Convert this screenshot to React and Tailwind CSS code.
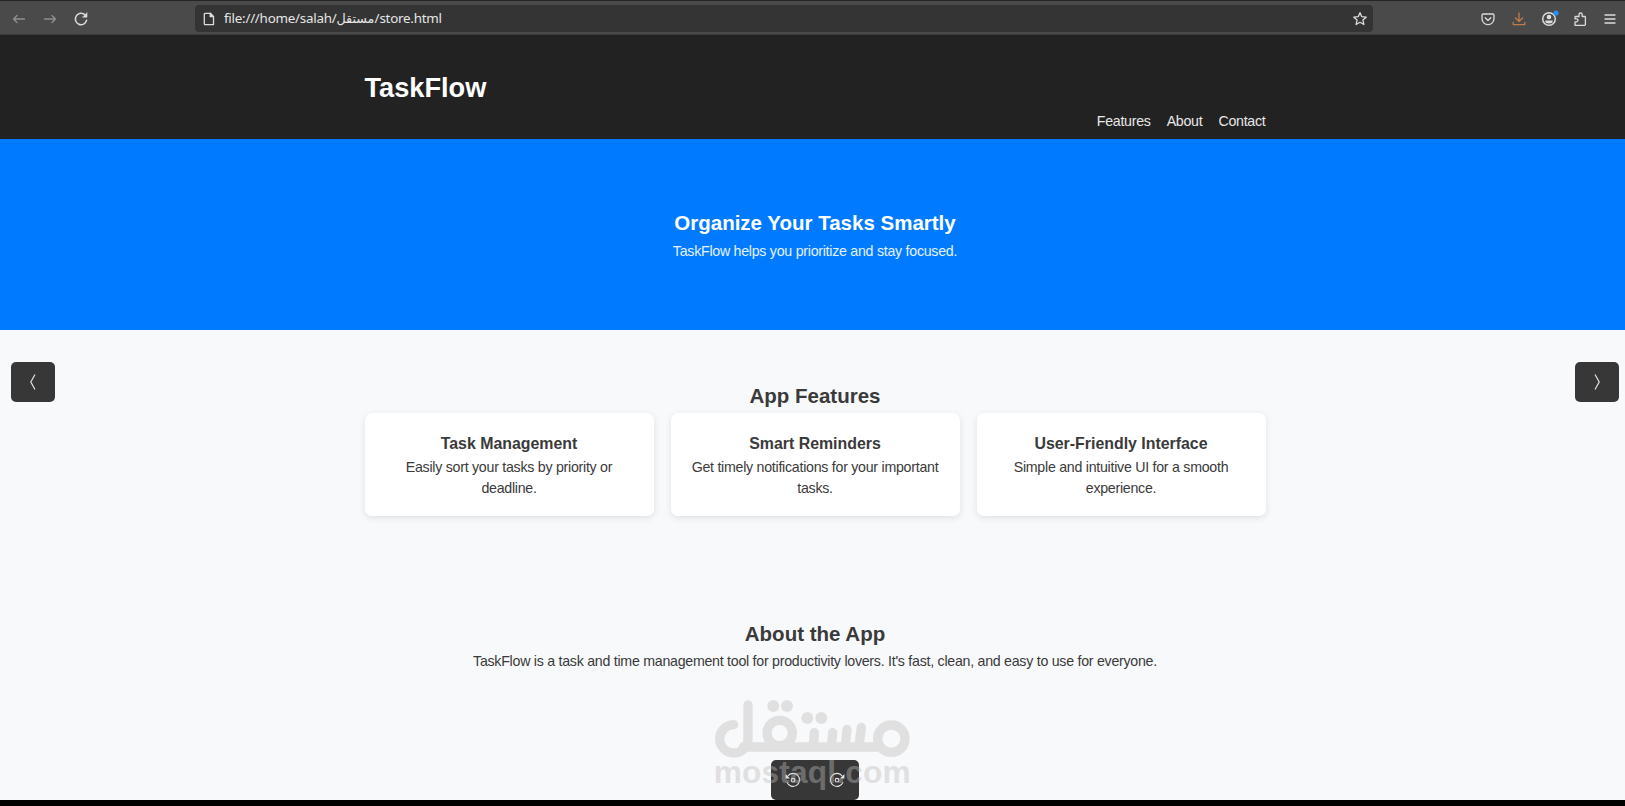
import React from "react";

const features = [
  {
    title: "Task Management",
    text: "Easily sort your tasks by priority or deadline.",
  },
  {
    title: "Smart Reminders",
    text: "Get timely notifications for your important tasks.",
  },
  {
    title: "User-Friendly Interface",
    text: "Simple and intuitive UI for a smooth experience.",
  },
];

const links = ["Features", "About", "Contact"];

const Icon = ({ children, className = "" }) => (
  <svg
    viewBox="0 0 16 16"
    fill="none"
    stroke="currentColor"
    strokeWidth="1.3"
    strokeLinecap="round"
    strokeLinejoin="round"
    className={`size-4 shrink-0 ${className}`}
  >
    {children}
  </svg>
);

const BrowserBar = () => (
  <div className="flex h-[35px] items-center border-t border-b border-t-[#242424] border-b-[#3a3a3a] bg-[#4a4a4a] pt-[2.5px] text-[#dcdcdc]">
    <div className="flex w-[195px] items-center gap-[15px] pl-[11px]">
      <Icon className="text-[#8f8f8f]">
        <path d="M13.5 8h-11M6 4.5 2.5 8 6 11.5" />
      </Icon>
      <Icon className="text-[#8f8f8f]">
        <path d="M2.5 8h11M10 4.5 13.5 8 10 11.5" />
      </Icon>
      <Icon>
        <path d="M13.6 9.2A5.7 5.7 0 1 1 12 3.9" strokeWidth="1.5" />
        <path d="M14 2v4.2H9.8z" fill="currentColor" strokeWidth="0.6" />
      </Icon>
    </div>

    <div className="flex h-[27px] w-[1178px] items-center rounded bg-[#343434] pr-[5px] pl-[6px]">
      <Icon>
        <path d="M4.2 2.3h5l3.3 3.4v8H4.2a.9.9 0 0 1-.9-.9V3.2a.9.9 0 0 1 .9-.9z" />
        <path d="M9.2 2.3v3.4h3.3z" fill="currentColor" />
      </Icon>
      <span
        dir="ltr"
        className="ml-[7px] flex-1 font-['Noto_Sans','DejaVu_Sans',sans-serif] text-[13.4px] leading-none tracking-[-0.25px] whitespace-nowrap text-[#e6e6e6]"
      >
        file:///home/salah/
        <span className="text-[12.7px] tracking-normal">مستقل</span>
        /store.html
      </span>
      <Icon>
        <path d="M8 1.7l1.8 4 4.4.5-3.3 2.9 1 4.4L8 11.3l-3.9 2.2 1-4.4-3.3-2.9 4.4-.5z" />
      </Icon>
    </div>

    <div className="ml-auto flex items-center gap-[14.5px] pr-[7px]">
      <Icon>
        <path d="M3.2 3h9.6c.7 0 1.2.5 1.2 1.2v3.4a6 6 0 0 1-12 0V4.2C2 3.5 2.5 3 3.2 3z" />
        <path d="M5.2 6.8 8 9.4l2.8-2.6" />
      </Icon>
      <Icon className="text-[#c07b4c]">
        <path d="M8 2v8.3M4.4 7 8 10.5 11.6 7M2.2 11.5v2.2h11.6v-2.2" />
      </Icon>
      <Icon className="overflow-visible">
        <circle cx="8" cy="8" r="6.3" strokeWidth="1.5" />
        <circle cx="8" cy="6" r="2.3" fill="currentColor" stroke="none" />
        <path
          d="M4.3 9.6h7.4v.6a3.7 2.2 0 0 1-7.4 0z"
          fill="currentColor"
          stroke="none"
        />
        <circle cx="15" cy="2" r="2.6" fill="#2a8ff0" stroke="none" />
      </Icon>
      <Icon>
        <path d="M3 14.3h9.6a.8.8 0 0 0 .8-.8V6.3a.8.8 0 0 0-.8-.8h-2.4V3.6a1.6 1.6 0 0 0-3.2 0v1.9H3.8a.8.8 0 0 0-.8.8v1.5h1.5a1.5 1.5 0 0 1 0 3H3z" />
      </Icon>
      <Icon>
        <path d="M3 4h10M3 8h10M3 12h10" />
      </Icon>
    </div>
  </div>
);

const Container = ({ children, className = "" }) => (
  <div className={`mx-auto w-[901px] ${className}`}>{children}</div>
);

const Heading = ({ children }) => (
  <h2 className="text-[20.5px] leading-[32.5px] font-bold tracking-normal">
    {children}
  </h2>
);

const RotateIcon = ({ flip }) => (
  <svg
    viewBox="0 0 16 16"
    fill="none"
    stroke="#e4e4e4"
    strokeWidth="1.1"
    className={flip ? "size-4 -scale-x-100" : "size-4"}
  >
    <path d="M2.8 4A6.5 6.5 0 1 1 2 10.4" />
    <path d="M.6 2v4.4H5z" fill="#e4e4e4" stroke="none" />
    <circle cx="8" cy="8.2" r="1.8" />
  </svg>
);

// Logo mark and site name laid over the lower part of the page
const Watermark = () => (
  <svg
    viewBox="0 0 750 360"
    className="pointer-events-none absolute top-[680px] left-[690px] h-[120px] w-[250px] opacity-40"
  >
    <g
      fill="none"
      stroke="#bebcbc"
      strokeWidth="28"
      strokeLinecap="round"
      strokeLinejoin="round"
    >
      <path d="M131 134A42.5 42.5 0 1 0 174 176V75" />
      <path d="M160 201H562" />
      <circle cx="269" cy="159" r="38" />
      <circle cx="604" cy="176" r="41" />
      <path d="M373 158l-3 38M428 158l-3 38M471 148l-5 48M514 142l-7 54" />
    </g>
    <g fill="#bebcbc">
      <circle cx="250" cy="78" r="18" />
      <circle cx="291" cy="78" r="18" />
      <circle cx="352" cy="114" r="18" />
      <circle cx="394" cy="114" r="18" />
      <text
        x="71"
        y="309"
        textLength="591"
        className="font-['Liberation_Sans',sans-serif] text-[95px] font-bold tracking-normal"
      >
        mostaql.com
      </text>
    </g>
  </svg>
);

const App = () => {
  return (
    <div className="relative flex h-[806px] w-[1625px] flex-col overflow-hidden bg-[#f8f9fb] font-['Liberation_Sans',Arial,sans-serif] text-[14.2px] leading-[21.67px] tracking-[-0.26px] text-[#3a3a3a]">
      <BrowserBar />

      <header className="h-[104px] bg-[#222] pt-[31px] pl-[5px] text-white">
        <Container>
          <h1 className="text-[27.2px] leading-[43.33px] font-bold tracking-normal">
            TaskFlow
          </h1>
          <nav className="flex justify-end gap-4 pt-[1.3px] text-[#e8e8e8]">
            {links.map((link) => (
              <a key={link} href={`#${link.toLowerCase()}`}>
                {link}
              </a>
            ))}
          </nav>
        </Container>
      </header>

      <section className="h-[190.5px] bg-[#007bff] pt-[68px] pl-[5px] text-center text-white">
        <Heading>Organize Your Tasks Smartly</Heading>
        <p className="pt-[1.5px] text-white/90">
          TaskFlow helps you prioritize and stay focused.
        </p>
      </section>

      <section id="features" className="pt-[50px] pb-[51px] pl-[5px] text-center">
        <Container>
          <Heading>App Features</Heading>
          <div className="mt-[1.4px] grid grid-cols-3 gap-[17px]">
            {features.map((item) => (
              <div
                key={item.title}
                className="rounded-[7px] bg-white px-[17px] pt-[17.5px] pb-4 shadow-[0_2px_7px_rgba(0,0,0,0.1)]"
              >
                <h3 className="text-[15.9px] leading-[25.34px] font-bold tracking-normal">
                  {item.title}
                </h3>
                <p className="pt-[0.3px]">{item.text}</p>
              </div>
            ))}
          </div>
        </Container>
      </section>

      <section id="about" className="flex-1 pt-[51px] pl-[5px] text-center">
        <Heading>About the App</Heading>
        <p className="pt-[0.3px]">
          TaskFlow is a task and time management tool for productivity lovers.
          It's fast, clean, and easy to use for everyone.
        </p>
      </section>

      <div className="h-1.5 bg-black" />

      {/* Viewer controls */}
      <button className="absolute top-[362px] left-[11px] flex h-10 w-11 items-center justify-center rounded-[5px] bg-[#373737]">
        <svg
          viewBox="0 0 6 16"
          fill="none"
          stroke="#e4e4e4"
          strokeWidth="1.2"
          className="h-4 w-1.5"
        >
          <path d="M5 .5.8 8 5 15.5" />
        </svg>
      </button>
      <button className="absolute top-[362px] left-[1575px] flex h-10 w-11 items-center justify-center rounded-[5px] bg-[#373737]">
        <svg
          viewBox="0 0 6 16"
          fill="none"
          stroke="#e4e4e4"
          strokeWidth="1.2"
          className="h-4 w-1.5"
        >
          <path d="M1 .5 5.2 8 1 15.5" />
        </svg>
      </button>
      <div className="absolute top-[760px] left-[771px] flex h-10 w-[88px] items-center justify-around rounded-[5px] bg-[#373737]">
        <RotateIcon />
        <RotateIcon flip />
      </div>

      <Watermark />
    </div>
  );
};

export default App;
